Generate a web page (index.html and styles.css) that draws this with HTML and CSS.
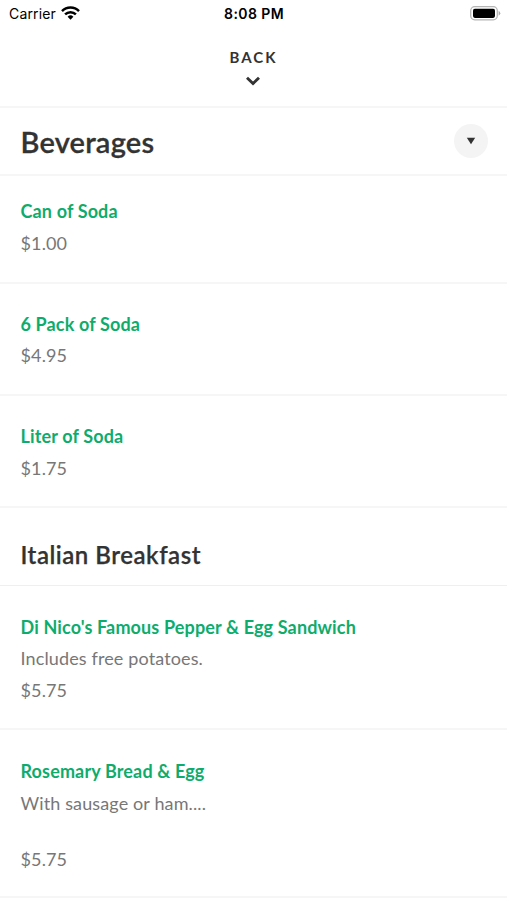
FILE: index.html
```html
<!DOCTYPE html>
<html lang="en">
<head>
<meta charset="utf-8">
<title>Menu</title>
<link rel="stylesheet" href="styles.css">
</head>
<body>
<header class="status">
  <div class="carrier">Carrier
    <svg class="wifi" width="19" height="14" viewBox="0 0 19 14" fill="none" stroke="#000" stroke-width="2.5"><path d="M1 5.1a12 12 0 0 1 17 0M4.1 8.4a7.6 7.6 0 0 1 10.8 0"/><path d="M9.5 13.7l-2.9-3a4.1 4.1 0 0 1 5.8 0z" fill="#000" stroke="none"/></svg>
  </div>
  <div class="time">8:08 PM</div>
  <svg class="battery" width="31" height="15" viewBox="0 0 31 15"><rect x=".7" y=".7" width="26.6" height="13.1" rx="4" fill="#fff" stroke="#b5b5b5" stroke-width="1.3"/><rect x="3" y="2.7" width="22" height="9.2" rx="1.8"/><path d="M28.6 4.8q3.4 2.5 0 5z" fill="#aaa"/></svg>
</header>
<nav class="back">
  <span>BACK</span>
  <svg width="16" height="10" viewBox="0 0 16 10" fill="none" stroke="#333" stroke-width="2.9"><path d="M2 1.8l6 5.7 6-5.7"/></svg>
</nav>
<main>
  <div class="category"><h1>Beverages</h1><button class="toggle" aria-label="Categories"><svg width="10" height="8" viewBox="0 0 10 8"><path d="M.8.8h8.4L5 7.2z" fill="#333"/></svg></button></div>
  <article class="item first"><h3>Can of Soda</h3><p>$1.00</p></article>
  <article class="item"><h3>6 Pack of Soda</h3><p>$4.95</p></article>
  <article class="item"><h3>Liter of Soda</h3><p>$1.75</p></article>
  <h2 class="section">Italian Breakfast</h2>
  <article class="item tall"><h3>Di Nico's Famous Pepper &amp; Egg Sandwich</h3><p>Includes free potatoes.</p><p>$5.75</p></article>
  <article class="item last"><h3>Rosemary Bread &amp; Egg</h3><p>With sausage or ham....</p><p class="price">$5.75</p></article>
</main>
</body>
</html>
```
FILE: styles.css
```css
* { box-sizing: border-box; }
body { margin: 0; height: 900px; overflow: hidden; background: #fff; color: #333; font-family: Lato, sans-serif; }
h1, h2, h3, p { margin: 0; }
.status { display: grid; grid-template-columns: 1fr auto 1fr; align-items: center; height: 27px; padding: 0 6px 0 9px; font-family: Inter, sans-serif; font-size: 14px; color: #000; }
.carrier { display: flex; align-items: center; gap: 5px; letter-spacing: .15px; }
.wifi { margin-top: -2px; }
.time { margin-right: 2px; font-weight: 600; letter-spacing: .4px; }
.battery { justify-self: end; }
.back { display: flex; flex-direction: column; align-items: center; height: 81px; padding-top: 20px; border-bottom: 2px solid #f6f6f6; font-size: 15px; line-height: 20px; font-weight: 700; letter-spacing: 2px; }
.back svg { margin: 9px 2px 0 0; }
.category { display: flex; align-items: center; justify-content: space-between; height: 68px; padding: 0 19px 0 20.5px; border-bottom: 2px solid #f6f6f6; }
h1 { padding-top: 1px; font-size: 29px; line-height: 36px; font-weight: 600; letter-spacing: .2px; -webkit-text-stroke: .3px #333; }
.toggle { display: grid; place-items: center; width: 34px; height: 34px; padding: 0; border: 0; border-radius: 50%; background: #f4f4f4; }
.item { height: 112.2px; padding: 24.2px 20.5px 0; border-bottom: 2px solid #f6f6f6; font-size: 18px; line-height: 32px; }
.item h3 { margin-bottom: -.3px; font-size: 18px; font-weight: 700; letter-spacing: .14px; color: #0eac6c; }
.item p { letter-spacing: .13px; color: #777; }
.first { height: 107.6px; padding-top: 19px; }
.section { height: 78.2px; padding: 30px 20.5px 0; border-bottom: 1px solid #efefef; font-size: 24px; line-height: 34px; font-weight: 600; letter-spacing: .52px; -webkit-text-stroke: .25px #333; }
.tall { height: 144.2px; padding-top: 24.5px; }
.last { height: 168px; padding-top: 24.5px; }
.last .price { margin-top: 24px; }
```
